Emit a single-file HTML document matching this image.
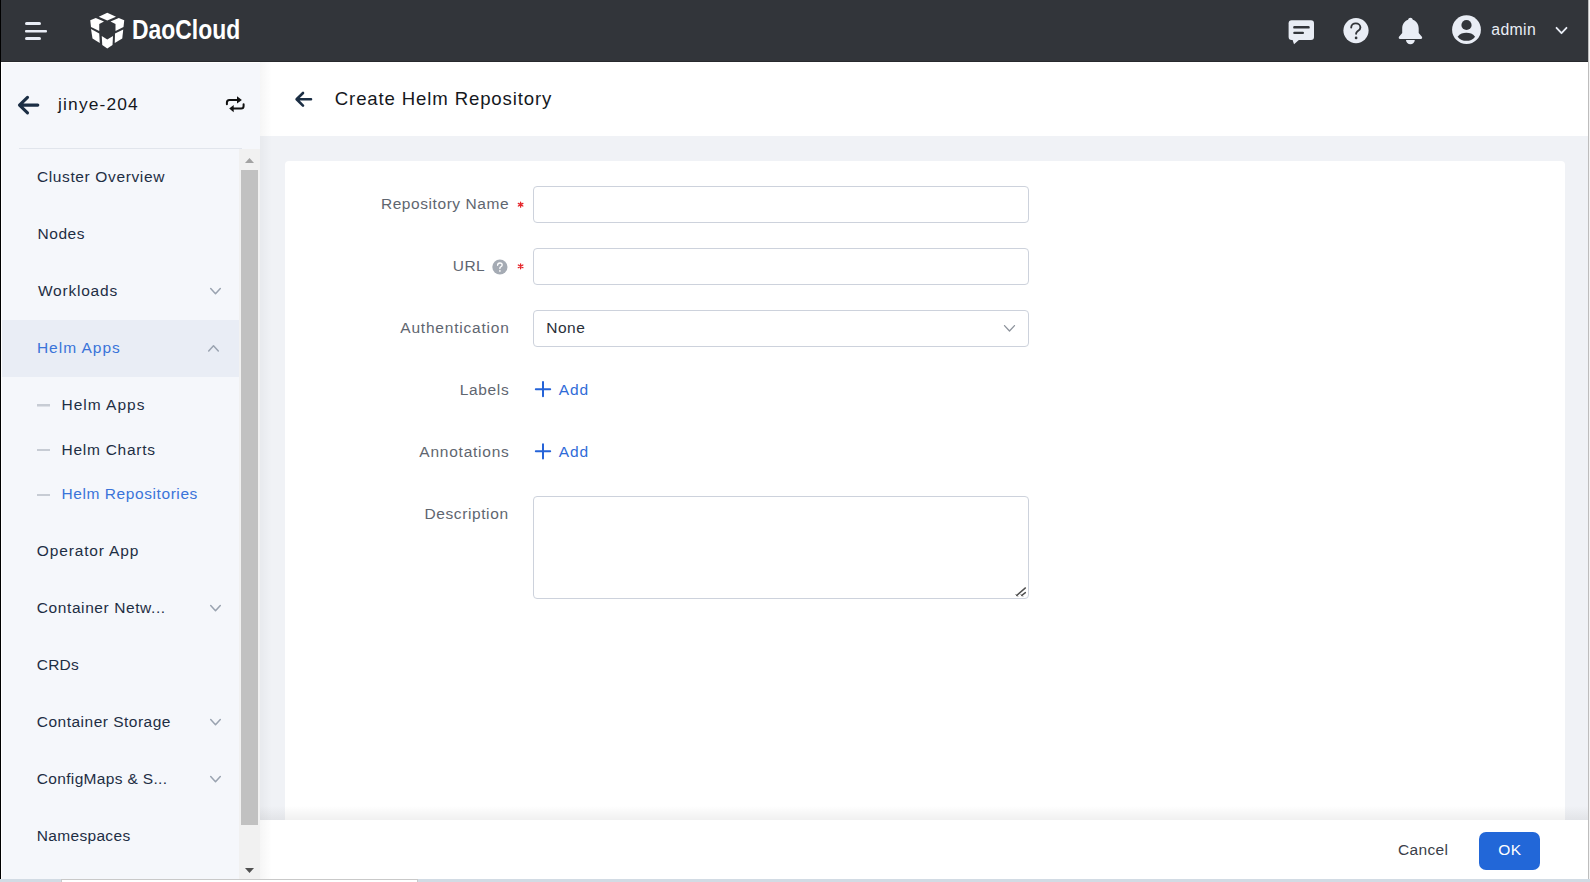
<!DOCTYPE html>
<html><head><meta charset="utf-8"><title>Create Helm Repository</title>
<style>
html,body{margin:0;padding:0;}
body{width:1590px;height:882px;overflow:hidden;position:relative;background:#fff;font-family:"Liberation Sans",sans-serif;}
.a{position:absolute;}
.t{position:absolute;white-space:pre;font-family:"Liberation Sans",sans-serif;}
.inp{position:absolute;box-sizing:border-box;border:1px solid #cdd2dc;border-radius:4px;background:#fff;}
</style></head><body>
<!-- left edge -->
<div class="a" style="left:0;top:0;width:1px;height:882px;background:#000"></div>
<!-- header -->
<div class="a" style="left:1px;top:0;width:1587px;height:61px;background:#32353a"></div>
<div class="a" style="left:1px;top:61px;width:1587px;height:1px;background:#27292d"></div>
<!-- sidebar -->
<div class="a" style="left:1px;top:62px;width:259px;height:817px;background:#fff"></div>
<div class="a" style="left:2px;top:63px;width:258px;height:816px;background:#f5f7fb"></div>
<div class="a" style="left:2px;top:320px;width:237px;height:57px;background:#e9edf5"></div>
<div class="a" style="left:19px;top:148px;width:223px;height:1px;background:#e1e5ec"></div>
<!-- scrollbar -->
<div class="a" style="left:239px;top:149px;width:21px;height:730px;background:#f1f1f1"></div>
<div class="a" style="left:241px;top:170px;width:17px;height:655px;background:#c1c1c1"></div>
<!-- main header -->
<div class="a" style="left:260px;top:62px;width:1328px;height:74px;background:#fff"></div>
<!-- content bg -->
<div class="a" style="left:260px;top:136px;width:1328px;height:684px;background:#f0f2f6"></div>
<div class="a" style="left:285px;top:161px;width:1280px;height:680px;background:#fff;border-radius:4px 4px 0 0"></div>
<!-- footer shadow -->
<div class="a" style="left:260px;top:806px;width:1328px;height:14px;background:linear-gradient(to bottom,rgba(0,0,0,0),rgba(0,0,0,0.06))"></div>
<div class="a" style="left:260px;top:820px;width:1328px;height:59px;background:#fff"></div>
<!-- sidebar shadow -->
<div class="a" style="left:260px;top:62px;width:12px;height:817px;background:linear-gradient(to right,rgba(0,0,0,0.035),rgba(0,0,0,0))"></div>
<!-- right edge -->
<div class="a" style="left:1588px;top:0;width:1px;height:882px;background:#bdbdbd"></div>
<div class="a" style="left:1589px;top:0;width:1px;height:882px;background:#f4f4f4"></div>
<!-- bottom strip -->
<div class="a" style="left:0;top:879px;width:1590px;height:3px;background:#d2dbe4"></div>
<div class="a" style="left:61px;top:879px;width:357px;height:3px;background:#c9c9c9"></div>
<div class="a" style="left:62px;top:880px;width:355px;height:2px;background:#fff"></div>

<!-- form controls -->
<div class="inp" style="left:533px;top:186px;width:496px;height:37px"></div>
<div class="inp" style="left:533px;top:248px;width:496px;height:37px"></div>
<div class="inp" style="left:533px;top:310px;width:496px;height:37px"></div>
<textarea style="position:absolute;left:533px;top:496px;width:496px;height:103px;box-sizing:border-box;border:1px solid #cdd2dc;border-radius:4px;outline:none;resize:none;margin:0;padding:0;background:#fff"></textarea>
<div class="a" style="left:1479px;top:832px;width:61px;height:38px;background:#2267d8;border-radius:7px"></div>

<svg class="a" style="left:0;top:0" width="1590" height="882" viewBox="0 0 1590 882">
 <!-- hamburger -->
 <g fill="#e9edf5">
  <rect x="25" y="22" width="16" height="3" rx="1.5"/>
  <rect x="25" y="30" width="22" height="2.5" rx="1"/>
  <rect x="25" y="37" width="16" height="3" rx="1.5"/>
 </g>
 <!-- logo -->
 <g transform="translate(86,8)" fill="#ffffff">
  <polygon points="12.75,8.75 21.25,4.75 30,8.75 21.25,12.5"/>
  <polygon points="4.25,12.25 9.75,10 18,13.5 13.25,16 13.25,23 5,19"/>
  <polygon points="24.5,13.5 32.75,10 38.25,12.25 37.5,19 29.5,23 29.5,16"/>
  <polygon points="5,21 13.25,25.5 13.75,35 6.5,30.5"/>
  <polygon points="37.25,21.5 29,25.5 28.75,35 36.25,30.5"/>
  <polygon points="15.75,28 21.25,31.5 27,28 26.5,37 21.25,40.5 16.25,37"/>
 </g>
 <!-- chat -->
 <g>
  <rect x="1288.6" y="20.2" width="25.4" height="19.8" rx="3" fill="#e9edf5"/>
  <polygon points="1292.3,39 1300,39 1294,44.3" fill="#e9edf5"/>
  <rect x="1293.2" y="26.1" width="16.5" height="2.5" rx="1.2" fill="#32353a"/>
  <rect x="1293.2" y="31.8" width="10.8" height="2.3" rx="1.1" fill="#32353a"/>
 </g>
 <!-- help -->
 <circle cx="1356" cy="30.6" r="12.6" fill="#e9edf5"/>
 <path d="M1351.2,27.6 C1351.2,25 1353.3,23.4 1355.8,23.4 C1358.5,23.4 1360.4,25.2 1360.4,27.5 C1360.4,29.7 1358.5,30.6 1357.3,31.5 C1356.4,32.2 1356.1,32.9 1356.1,33.8" fill="none" stroke="#32353a" stroke-width="1.9" stroke-linecap="round"/>
 <circle cx="1356.1" cy="37.9" r="1.35" fill="#32353a"/>
 <!-- bell -->
 <path d="M1410.45,17.7 C1409.2,17.7 1408.3,18.6 1408.1,19.8 C1404.5,21 1402.2,24.3 1402.2,28.5 L1402.2,33 L1399,36.8 C1398.3,37.7 1398.9,39 1400,39 L1420.9,39 C1422,39 1422.6,37.7 1421.9,36.8 L1418.7,33 L1418.7,28.5 C1418.7,24.3 1416.4,21 1412.8,19.8 C1412.6,18.6 1411.7,17.7 1410.45,17.7 Z" fill="#e9edf5"/>
 <path d="M1406,40 A4.4,4.2 0 0 0 1414.8,40 Z" fill="#e9edf5"/>
 <!-- avatar -->
 <circle cx="1466.5" cy="29.65" r="14.4" fill="#e9edf5"/>
 <circle cx="1466.5" cy="25" r="5.1" fill="#32353a"/>
 <path d="M1457.6,36.7 C1460,33.6 1463,32.8 1466.4,32.8 C1469.8,32.8 1472.8,33.6 1475.1,36.7 C1472.8,39.7 1469.8,40.8 1466.4,40.8 C1463,40.8 1460,39.7 1457.6,36.7 Z" fill="#32353a"/>
 <path d="M1556.5,27.8 L1561.5,33.2 L1566.5,27.8" fill="none" stroke="#e9edf5" stroke-width="1.8" stroke-linecap="round" stroke-linejoin="round"/>

 <!-- sidebar back arrow -->
 <path d="M37.8,105.1 L20,105.1 M27.5,97.3 L19.5,105.1 L27.5,112.9" fill="none" stroke="#1b2e44" stroke-width="3.1" stroke-linecap="round" stroke-linejoin="round"/>
 <!-- swap icon -->
 <g fill="none" stroke="#111" stroke-width="2" stroke-linecap="round">
  <path d="M226.9,104.2 L226.9,102.5 C226.9,101 227.9,100 229.4,100 L238,100"/>
  <path d="M243.6,104.2 L243.6,106 C243.6,107.5 242.6,108.6 241.1,108.6 L232.5,108.6"/>
 </g>
 <polygon points="237,96.3 241.9,100 237,103.4" fill="#111"/>
 <polygon points="233.7,105 229.2,108.6 233.7,112.2" fill="#111"/>
 <!-- scrollbar arrows -->
 <polygon points="245,163 254,163 249.5,158" fill="#a3a3a3"/>
 <polygon points="245,868 254,868 249.5,873" fill="#505050"/>
 <!-- chevrons -->
 <g fill="none" stroke="#9aa3b0" stroke-width="1.5" stroke-linecap="round" stroke-linejoin="round">
  <path d="M210.7,288.6 L215.5,293.8 L220.3,288.6"/>
  <path d="M208.7,351 L213.5,345.8 L218.3,351"/>
  <path d="M210.7,605.6 L215.5,610.8 L220.3,605.6"/>
  <path d="M210.7,719.6 L215.5,724.8 L220.3,719.6"/>
  <path d="M210.7,776.6 L215.5,781.8 L220.3,776.6"/>
 </g>
 <!-- sub dashes -->
 <g fill="#c7ccd4">
  <rect x="37" y="404" width="13" height="2.5"/>
  <rect x="37" y="449" width="13" height="2"/>
  <rect x="37" y="494" width="13" height="2"/>
 </g>
 <!-- main back arrow -->
 <path d="M311,99.3 L297,99.3 M303,93 L296.6,99.3 L303,105.6" fill="none" stroke="#1b2e44" stroke-width="2.6" stroke-linecap="round" stroke-linejoin="round"/>
 <!-- asterisks -->
 <g stroke="#e5252a" stroke-width="1.3" stroke-linecap="round">
  <path d="M520.6,202.2 V207.2 M518.3,203.4 L522.9,206 M518.3,206 L522.9,203.4"/>
  <path d="M520.6,263.8 V268.8 M518.3,265 L522.9,267.6 M518.3,267.6 L522.9,265"/>
 </g>
 <!-- help small -->
 <circle cx="499.9" cy="267" r="7.6" fill="#a5abb4"/>
 <path d="M497.6,265.3 C497.6,263.9 498.6,263 499.9,263 C501.2,263 502.2,263.9 502.2,265 C502.2,266.2 500.9,266.6 500.2,267.3 C499.9,267.6 499.9,268 499.9,268.6" fill="none" stroke="#fff" stroke-width="1.3" stroke-linecap="round"/>
 <circle cx="499.9" cy="270.9" r="0.85" fill="#fff"/>
 <!-- select chevron -->
 <path d="M1004.5,325.6 L1009.5,331 L1014.5,325.6" fill="none" stroke="#8d939c" stroke-width="1.3" stroke-linecap="round" stroke-linejoin="round"/>
 <!-- resize handle -->
 <g stroke="#505050" stroke-width="1.4" stroke-linecap="round">
  <path d="M1016.8,595.4 L1025.4,587.9"/>
  <path d="M1021.8,595.4 L1025.4,592.6"/>
  <path d="M1016,594.6 L1017.6,596.2 M1021,594.6 L1022.6,596.2" stroke-width="1"/>
 </g>
 <!-- plus icons -->
 <g stroke="#2563d8" stroke-width="2" stroke-linecap="round">
  <path d="M543,382 V396.3 M535.8,389.2 H550.2"/>
  <path d="M543,444.2 V458.5 M535.8,451.3 H550.2"/>
 </g>
</svg>
<span class="t" style="left:131.8px;top:15.7px;font-size:27.2px;line-height:27.2px;font-weight:700;letter-spacing:0px;color:#ffffff;transform:scaleX(0.843);transform-origin:0 0;">DaoCloud</span>
<span class="t" style="left:1491.3px;top:21.6px;font-size:15.8px;line-height:15.8px;font-weight:400;letter-spacing:0.35px;color:#e9edf5;">admin</span>
<span class="t" style="left:58.1px;top:95.8px;font-size:17.4px;line-height:17.4px;font-weight:400;letter-spacing:1.14px;color:#15181d;">jinye-204</span>
<span class="t" style="left:334.8px;top:89.8px;font-size:18.6px;line-height:18.6px;font-weight:400;letter-spacing:0.86px;color:#15181d;">Create Helm Repository</span>
<span class="t" style="left:36.9px;top:168.8px;font-size:15.5px;line-height:15.5px;font-weight:400;letter-spacing:0.63px;color:#1e2e44;">Cluster Overview</span>
<span class="t" style="left:37.4px;top:225.8px;font-size:15.5px;line-height:15.5px;font-weight:400;letter-spacing:0.6px;color:#1e2e44;">Nodes</span>
<span class="t" style="left:37.9px;top:282.8px;font-size:15.5px;line-height:15.5px;font-weight:400;letter-spacing:0.79px;color:#1e2e44;">Workloads</span>
<span class="t" style="left:36.9px;top:340.0px;font-size:15.5px;line-height:15.5px;font-weight:400;letter-spacing:1.0px;color:#3a74d9;">Helm Apps</span>
<span class="t" style="left:61.5px;top:397.2px;font-size:15.5px;line-height:15.5px;font-weight:400;letter-spacing:1.0px;color:#1e2e44;">Helm Apps</span>
<span class="t" style="left:61.5px;top:441.6px;font-size:15.5px;line-height:15.5px;font-weight:400;letter-spacing:0.74px;color:#1e2e44;">Helm Charts</span>
<span class="t" style="left:61.5px;top:486.0px;font-size:15.5px;line-height:15.5px;font-weight:400;letter-spacing:0.575px;color:#3a74d9;">Helm Repositories</span>
<span class="t" style="left:36.8px;top:543.3px;font-size:15.5px;line-height:15.5px;font-weight:400;letter-spacing:0.85px;color:#1e2e44;">Operator App</span>
<span class="t" style="left:36.8px;top:600.1px;font-size:15.5px;line-height:15.5px;font-weight:400;letter-spacing:0.59px;color:#1e2e44;">Container Netw...</span>
<span class="t" style="left:36.8px;top:657.0px;font-size:15.5px;line-height:15.5px;font-weight:400;letter-spacing:0.2px;color:#1e2e44;">CRDs</span>
<span class="t" style="left:36.8px;top:714.2px;font-size:15.5px;line-height:15.5px;font-weight:400;letter-spacing:0.49px;color:#1e2e44;">Container Storage</span>
<span class="t" style="left:36.8px;top:770.8px;font-size:15.5px;line-height:15.5px;font-weight:400;letter-spacing:0.33px;color:#1e2e44;">ConfigMaps & S...</span>
<span class="t" style="left:36.8px;top:827.5px;font-size:15.5px;line-height:15.5px;font-weight:400;letter-spacing:0.32px;color:#1e2e44;">Namespaces</span>
<span class="t" style="left:380.9px;top:196.2px;font-size:15.5px;line-height:15.5px;font-weight:400;letter-spacing:0.57px;color:#5f6670;">Repository Name</span>
<span class="t" style="left:452.8px;top:257.9px;font-size:15.5px;line-height:15.5px;font-weight:400;letter-spacing:0.4px;color:#5f6670;">URL</span>
<span class="t" style="left:400.3px;top:320.0px;font-size:15.5px;line-height:15.5px;font-weight:400;letter-spacing:0.79px;color:#5f6670;">Authentication</span>
<span class="t" style="left:459.8px;top:382.0px;font-size:15.5px;line-height:15.5px;font-weight:400;letter-spacing:0.64px;color:#5f6670;">Labels</span>
<span class="t" style="left:419.3px;top:444.1px;font-size:15.5px;line-height:15.5px;font-weight:400;letter-spacing:0.77px;color:#5f6670;">Annotations</span>
<span class="t" style="left:424.4px;top:505.6px;font-size:15.5px;line-height:15.5px;font-weight:400;letter-spacing:0.61px;color:#5f6670;">Description</span>
<span class="t" style="left:546.2px;top:320.0px;font-size:15.5px;line-height:15.5px;font-weight:400;letter-spacing:0.53px;color:#2a3039;">None</span>
<span class="t" style="left:558.8px;top:382.0px;font-size:15.5px;line-height:15.5px;font-weight:400;letter-spacing:0.85px;color:#2f6bd8;">Add</span>
<span class="t" style="left:558.8px;top:444.1px;font-size:15.5px;line-height:15.5px;font-weight:400;letter-spacing:0.85px;color:#2f6bd8;">Add</span>
<span class="t" style="left:1397.9px;top:842.0px;font-size:15.5px;line-height:15.5px;font-weight:400;letter-spacing:0.38px;color:#3a4049;">Cancel</span>
<span class="t" style="left:1498.2px;top:842.0px;font-size:15.5px;line-height:15.5px;font-weight:400;letter-spacing:0.6px;color:#ffffff;">OK</span>
</body></html>
